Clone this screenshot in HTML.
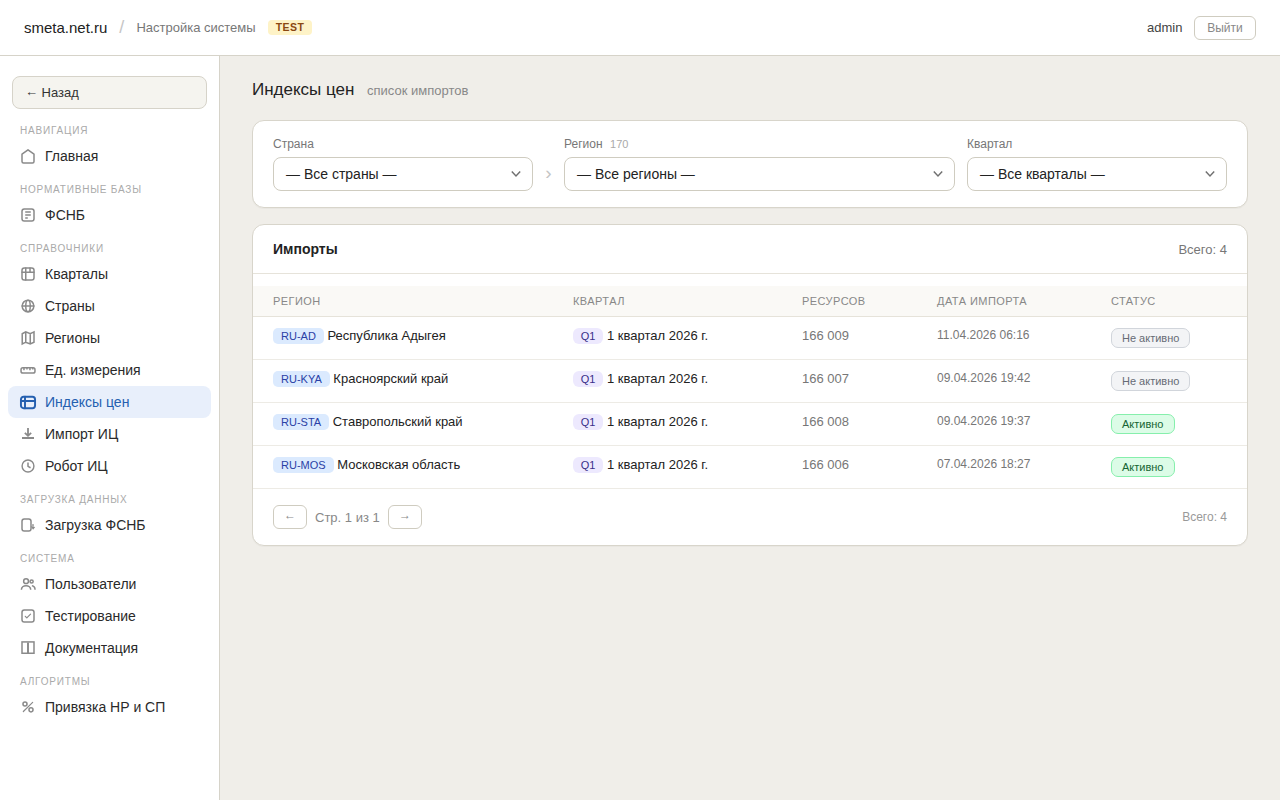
<!DOCTYPE html>
<html lang="ru"><head><meta charset="utf-8">
<style>
*{box-sizing:border-box;margin:0;padding:0}
html,body{width:1280px;height:800px;overflow:hidden}
body{font-family:"Liberation Sans",sans-serif;background:#f0eee9;color:#1f1f1f;font-size:14px;position:relative}
.hdr{position:absolute;left:0;top:0;width:1280px;height:56px;background:#fff;border-bottom:1px solid #d6d3c9}
.hdr .brand{position:absolute;left:24px;top:19px;font-size:15px;color:#222;line-height:17px}
.hdr .sep{position:absolute;left:119.3px;top:17px;font-size:18px;color:#c6c6c6;line-height:20px}
.hdr .sub{position:absolute;left:136.4px;top:20px;font-size:13px;color:#777;line-height:15px}
.hdr .test{position:absolute;left:268px;top:20px;height:15px;width:44px;background:#fef3c7;border-radius:4px;font-size:10.5px;font-weight:bold;color:#8a4712;text-align:center;line-height:15px;letter-spacing:.4px}
.hdr .user{position:absolute;left:1147px;top:20px;font-size:13px;color:#444;line-height:15px}
.hdr .out{position:absolute;left:1194px;top:16px;width:62px;height:24px;border:1px solid #cfccc0;border-radius:6px;font-size:12px;color:#888;text-align:center;line-height:22px;background:#fff}
.side{position:absolute;left:0;top:56px;width:220px;height:744px;background:#fff;border-right:1px solid #d6d3c9}
.back{position:absolute;left:12px;top:20px;width:195px;height:33px;border:1px solid #d6d3c9;border-radius:8px;background:#f5f4ef;font-size:13px;color:#333;line-height:31px;padding-left:12px}
.sec{position:absolute;left:20px;font-size:10px;letter-spacing:.8px;color:#aaa;line-height:12px;text-transform:uppercase}
.item{position:absolute;left:8px;width:203px;height:32px;border-radius:8px;font-size:14px;color:#2a2a2a;line-height:32px;padding-left:37px}
.item svg{position:absolute;left:11px;top:7px;width:18px;height:18px;stroke:#8a8a8a;fill:none;stroke-width:2;stroke-linecap:round;stroke-linejoin:round}
.item.act{background:#e8effb;color:#2560b0}
.item.act svg{stroke:#2560b0;stroke-width:2.6}
.main{position:absolute;left:220px;top:56px;width:1060px;height:744px}
h1{position:absolute;left:32px;top:24px;font-size:17px;font-weight:normal;color:#222;line-height:20px}
.h1s{position:absolute;left:147px;top:28px;font-size:13px;color:#888;line-height:14px}
.card{position:absolute;left:32px;width:996px;background:#fff;border:1px solid #d8d5cb;border-radius:12px;box-shadow:0 1px 1px rgba(0,0,0,.03)}
.lbl{position:absolute;font-size:12px;color:#777;line-height:14px}
.lbl span{font-size:11px;color:#aaa;margin-left:7.5px}
.sel{position:absolute;height:34px;border:1px solid #cfccc0;border-radius:8px;background:#fff;font-size:14px;color:#222;line-height:32px;padding-left:12px}
.sel svg{position:absolute;right:10px;top:10px;width:12px;height:12px;stroke:#707070;fill:none;stroke-width:1.45;stroke-linecap:butt;stroke-linejoin:miter}


.arr{position:absolute;left:292.3px;top:42.4px;font-size:19px;color:#c4c4c4;line-height:20px}
.ttl{position:absolute;left:20px;top:16px;font-size:14px;font-weight:bold;color:#222;line-height:17px}
.tot{position:absolute;right:20px;top:17px;font-size:13px;color:#777;line-height:15px}
.hl{position:absolute;left:0;width:994px;height:1px;background:#e6e3da}
.thead{position:absolute;left:0;top:61px;width:994px;height:31px;background:#faf9f6;border-bottom:1px solid #e6e3da}
.thead span{position:absolute;top:9px;font-size:11px;letter-spacing:.45px;color:#888;text-transform:uppercase;line-height:13px}
.row{position:absolute;left:0;width:994px;height:43px;border-bottom:1px solid #edebe5;font-size:13px}
.row span{position:absolute;line-height:16px}
.rg{left:20px;top:11px;white-space:nowrap}
.row .rg span{position:static}
.code{display:inline-block;height:16px;padding:0 8px;margin-right:3.6px;background:#dbeafe;color:#2a3fa6;border-radius:5px;font-size:11px;vertical-align:top}
.rn{color:#222}
.q{left:320px;top:11px;height:16px;width:30px;text-align:center;background:#ede9fe;color:#3a2f8a;border-radius:6px;font-size:11px}
.qn{left:354px;top:11px;color:#222}
.res{left:549px;top:11px;color:#777}
.dt{left:684px;top:10px;color:#777;font-size:12px}
.st{left:858px;top:11px;height:20px;padding:0 10px;border-radius:7px;font-size:11px;line-height:18px !important}
.st.off{background:#f3f4f6;border:1px solid #d1d5db;color:#666b75}
.st.on{background:#dcfce7;border:1px solid #86efac;color:#166534}
.pbtn{position:absolute;top:280px;width:34px;height:24px;border:1px solid #cfccc0;border-radius:6px;text-align:center;font-size:12px;color:#888;line-height:19px}
.ptxt{position:absolute;left:62px;top:285px;font-size:13px;color:#888;line-height:15px}
.ftot{position:absolute;right:20px;top:285px;font-size:12px;color:#999;line-height:14px}
</style></head><body>
<div class="hdr">
 <div class="brand">smeta.net.ru</div><div class="sep">/</div><div class="sub">Настройка системы</div><div class="test">TEST</div>
 <div class="user">admin</div><div class="out">Выйти</div>
</div>
<div class="side">
 <div class="back"><span style="position:relative;top:-1px">←</span> Назад</div>
 <div class="sec" style="top:69px">Навигация</div>
 <div class="item" style="top:84px"><svg viewBox="0 0 24 24"><path d="M4 9.6L12 3.7L20 9.6V19.3a2 2 0 0 1-2 2H6a2 2 0 0 1-2-2Z"/></svg>Главная</div>
 <div class="sec" style="top:128px">Нормативные базы</div>
 <div class="item" style="top:143px"><svg viewBox="0 0 24 24"><rect x="4" y="4" width="16" height="16" rx="3"/><path d="M9 8h6M9 12h6M9 16h2"/></svg>ФСНБ</div>
 <div class="sec" style="top:187px">Справочники</div>
 <div class="item" style="top:202px"><svg viewBox="0 0 24 24"><rect x="4" y="4" width="16" height="16" rx="3"/><path d="M4 9.5h16M9 4v16M14.7 4v5.5"/></svg>Кварталы</div>
 <div class="item" style="top:234px"><svg viewBox="0 0 24 24"><circle cx="12" cy="12" r="7.8"/><ellipse cx="12" cy="12" rx="3" ry="7.8"/><path d="M4.2 12h15.6"/></svg>Страны</div>
 <div class="item" style="top:266px"><svg viewBox="0 0 24 24"><path stroke-linejoin="miter" d="M4.3 6.3L9 3.9L15 6.3L20 3.9V17.6L15 20L9 17.6L4.3 20ZM9 3.9V17.6M15 6.3V20"/></svg>Регионы</div>
 <div class="item" style="top:298px"><svg viewBox="0 0 24 24"><rect x="2.7" y="9" width="18.6" height="7" rx="2.5"/><path stroke-linecap="butt" d="M6.6 9v3.4M10.6 9v2.2M14.6 9v3.4M18.4 9v2.2"/></svg>Ед. измерения</div>
 <div class="item act" style="top:330px"><svg viewBox="0 0 24 24"><rect x="2.6" y="5" width="18.8" height="15.2" rx="3.5"/><path d="M2.6 10.6h18.8M8 5v15.2"/></svg>Индексы цен</div>
 <div class="item" style="top:362px"><svg viewBox="0 0 24 24"><path stroke-linecap="butt" stroke-linejoin="miter" stroke-width="2.4" d="M12 4v10M7.8 10.4L12 14.4L16.2 10.4M4 17.3h16"/></svg>Импорт ИЦ</div>
 <div class="item" style="top:394px"><svg viewBox="0 0 24 24"><circle cx="12" cy="12" r="7.9" stroke-width="1.9"/><path stroke-linecap="butt" d="M12 7.4v5l3.4 1.9"/></svg>Робот ИЦ</div>
 <div class="sec" style="top:438px">Загрузка данных</div>
 <div class="item" style="top:453px"><svg viewBox="0 0 24 24"><rect x="4" y="4" width="12" height="16" rx="3"/><path d="M16.8 10.8h3.2v3.4h-3.2z" fill="#b0b0b0" stroke="none"/><path d="M15.6 13.8L21.6 14.8L18.8 18.2Z" fill="#8a8a8a" stroke="none"/></svg>Загрузка ФСНБ</div>
 <div class="sec" style="top:497px">Система</div>
 <div class="item" style="top:512px"><svg viewBox="0 0 24 24"><circle cx="9.4" cy="8.2" r="3.2"/><path stroke-linecap="butt" d="M3.2 19.8a6.2 5.6 0 0 1 12.4 0"/><circle cx="16.8" cy="8.6" r="2.1"/><path stroke-linecap="butt" d="M17.2 14.4a4.6 5.4 0 0 1 4.2 5.4"/></svg>Пользователи</div>
 <div class="item" style="top:544px"><svg viewBox="0 0 24 24"><rect x="4" y="4" width="16" height="16" rx="3"/><path stroke-width="1.6" d="M8.4 12.4l2 2.2l5-5"/></svg>Тестирование</div>
 <div class="item" style="top:576px"><svg viewBox="0 0 24 24"><rect stroke-linejoin="miter" x="4" y="3.9" width="16" height="15.1"/><path stroke-width="2.6" stroke-linecap="butt" d="M12 4.5v15"/></svg>Документация</div>
 <div class="sec" style="top:620px">Алгоритмы</div>
 <div class="item" style="top:635px"><svg viewBox="0 0 24 24"><path stroke-width="1.6" d="M5.8 18L18.2 5.8"/><circle cx="8" cy="8" r="2.7"/><circle cx="16" cy="15.8" r="2.7"/></svg>Привязка НР и СП</div>
</div>
<div class="main">
 <h1>Индексы цен</h1><div class="h1s">список импортов</div>
 <div class="card" id="filt" style="top:64px;height:88px">
  <div class="lbl" style="left:20px;top:16px">Страна</div>
  <div class="sel" style="left:20px;top:36px;width:260px">— Все страны —<svg viewBox="0 0 12 12"><path d="M1.8 3.6L6 8L10.2 3.6"/></svg></div>
  <div class="arr">›</div>
  <div class="lbl" style="left:311px;top:16px">Регион<span>170</span></div>
  <div class="sel" style="left:311px;top:36px;width:391px">— Все регионы —<svg viewBox="0 0 12 12"><path d="M1.8 3.6L6 8L10.2 3.6"/></svg></div>
  <div class="lbl" style="left:714px;top:16px">Квартал</div>
  <div class="sel" style="left:714px;top:36px;width:260px">— Все кварталы —<svg viewBox="0 0 12 12"><path d="M1.8 3.6L6 8L10.2 3.6"/></svg></div>
 </div>
 <div class="card" id="tbl" style="top:168px;height:322px">
  <div class="ttl">Импорты</div><div class="tot">Всего: 4</div>
  <div class="hl" style="top:48px"></div>
  <div class="thead"><span style="left:20px">Регион</span><span style="left:320px">Квартал</span><span style="left:549px">Ресурсов</span><span style="left:684px">Дата импорта</span><span style="left:858px">Статус</span></div>
  <div class="row" style="top:92px"><span class="rg"><span class="code">RU-AD</span><span class="rn">Республика Адыгея</span></span>
   <span class="q">Q1</span><span class="qn">1 квартал 2026 г.</span><span class="res">166 009</span><span class="dt">11.04.2026 06:16</span><span class="st off">Не активно</span></div>
  <div class="row" style="top:135px"><span class="rg"><span class="code">RU-KYA</span><span class="rn">Красноярский край</span></span>
   <span class="q">Q1</span><span class="qn">1 квартал 2026 г.</span><span class="res">166 007</span><span class="dt">09.04.2026 19:42</span><span class="st off">Не активно</span></div>
  <div class="row" style="top:178px"><span class="rg"><span class="code">RU-STA</span><span class="rn">Ставропольский край</span></span>
   <span class="q">Q1</span><span class="qn">1 квартал 2026 г.</span><span class="res">166 008</span><span class="dt">09.04.2026 19:37</span><span class="st on">Активно</span></div>
  <div class="row" style="top:221px"><span class="rg"><span class="code">RU-MOS</span><span class="rn">Московская область</span></span>
   <span class="q">Q1</span><span class="qn">1 квартал 2026 г.</span><span class="res">166 006</span><span class="dt">07.04.2026 18:27</span><span class="st on">Активно</span></div>
  <div class="pbtn" style="left:20px">←</div><div class="ptxt">Стр. 1 из 1</div><div class="pbtn" style="left:135px">→</div>
  <div class="ftot">Всего: 4</div>
 </div>
</div>
</body></html>
